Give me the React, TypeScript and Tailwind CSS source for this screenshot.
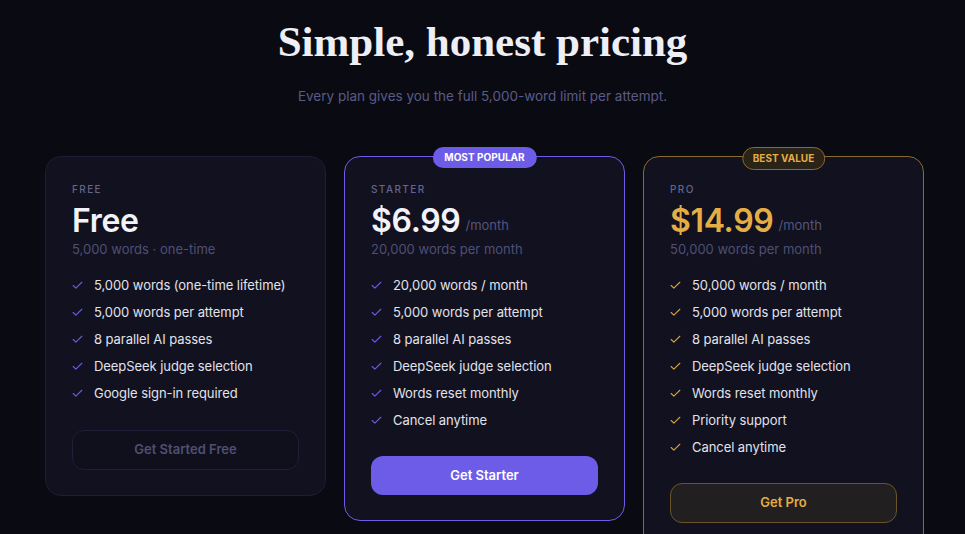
import { Check } from "lucide-react";

type Plan = {
  key: string;
  label: string;
  price: string;
  period?: string;
  sub: string;
  features: string[];
  cta: string;
  badge?: string;
  variant: "free" | "starter" | "pro";
};

const plans: Plan[] = [
  {
    key: "free",
    label: "FREE",
    price: "Free",
    sub: "5,000 words · one-time",
    features: [
      "5,000 words (one-time lifetime)",
      "5,000 words per attempt",
      "8 parallel AI passes",
      "DeepSeek judge selection",
      "Google sign-in required",
    ],
    cta: "Get Started Free",
    variant: "free",
  },
  {
    key: "starter",
    label: "STARTER",
    price: "$6.99",
    period: "/month",
    sub: "20,000 words per month",
    features: [
      "20,000 words / month",
      "5,000 words per attempt",
      "8 parallel AI passes",
      "DeepSeek judge selection",
      "Words reset monthly",
      "Cancel anytime",
    ],
    cta: "Get Starter",
    badge: "MOST POPULAR",
    variant: "starter",
  },
  {
    key: "pro",
    label: "PRO",
    price: "$14.99",
    period: "/month",
    sub: "50,000 words per month",
    features: [
      "50,000 words / month",
      "5,000 words per attempt",
      "8 parallel AI passes",
      "DeepSeek judge selection",
      "Words reset monthly",
      "Priority support",
      "Cancel anytime",
    ],
    cta: "Get Pro",
    badge: "BEST VALUE",
    variant: "pro",
  },
];

function PlanCard({ plan }: { plan: Plan }) {
  const border =
    plan.variant === "starter"
      ? "border-[#6c5ce7]"
      : plan.variant === "pro"
      ? "border-[#8a6a2f]"
      : "border-[#1d1d33]";
  const checkColor = plan.variant === "pro" ? "text-[#d9a23d]" : "text-[#6c5ce7]";
  const priceColor = plan.variant === "pro" ? "text-[#e5ad45]" : "text-[#f2f2f8]";

  return (
    <div className={`relative w-[281px] rounded-2xl border bg-[#11111f] px-[26px] pt-[25px] pb-[25px] ${border}`}>
      {plan.badge && plan.variant === "starter" && (
        <div className="absolute -top-[10px] left-1/2 -translate-x-1/2 rounded-full bg-[#6c5ce7] px-3 h-[21px] flex items-center text-[10px] font-bold text-white whitespace-nowrap">
          {plan.badge}
        </div>
      )}
      {plan.badge && plan.variant === "pro" && (
        <div className="absolute -top-[10px] left-1/2 -translate-x-1/2 rounded-full border border-[#8a6a2f] bg-[#2a2318] px-[10px] h-[23px] flex items-center text-[10px] font-bold text-[#e5ad45] whitespace-nowrap">
          {plan.badge}
        </div>
      )}

      <div className="text-[10px] leading-[14px] font-medium tracking-[0.14em] text-[#65658a]">{plan.label}</div>
      <div className="mt-[6px] h-[38px] flex items-center gap-[5px]">
        <span className={`text-[32px] leading-[38px] font-semibold tracking-[-0.01em] ${priceColor}`}>{plan.price}</span>
        {plan.period && <span className="mt-[7px] text-[13px] leading-[18px] text-[#55557c]">{plan.period}</span>}
      </div>
      <div className="text-[13px] leading-[18px] text-[#4f4f75]">{plan.sub}</div>

      <ul className="mt-[14px]">
        {plan.features.map((f) => (
          <li key={f} className="flex items-center gap-[10px] h-[27px] text-[13px] tracking-[-0.005em] text-[#e2e2ec]">
            <Check className={`-ml-[1px] w-[13px] h-[13px] shrink-0 ${checkColor}`} strokeWidth={2} />
            <span>{f}</span>
          </li>
        ))}
      </ul>

      {plan.variant === "free" && (
        <button className="mt-[23px] w-full h-[40px] rounded-xl border border-[#1f1f35] bg-[#10101d] text-[13px] font-semibold text-[#4f4f72]">
          {plan.cta}
        </button>
      )}
      {plan.variant === "starter" && (
        <button className="mt-[22px] w-full h-[39px] rounded-xl bg-[#6c5ce7] text-[13px] font-semibold text-white">
          {plan.cta}
        </button>
      )}
      {plan.variant === "pro" && (
        <button className="mt-[22px] w-full h-[40px] rounded-xl border border-[#6b5429] bg-[#221f21] text-[13px] font-semibold text-[#e5ad45]">
          {plan.cta}
        </button>
      )}
    </div>
  );
}

export default function App() {
  return (
    <div className="min-h-screen bg-[#0a0a12] font-['Inter','Noto_Sans',sans-serif] pt-[14px] overflow-hidden">
      <h1 className="text-center text-[43px] leading-[56px] font-bold text-[#eeeef6] font-['Liberation_Serif','DejaVu_Serif',serif]">
        Simple, honest pricing
      </h1>
      <p className="mt-[16px] text-center text-[13.5px] leading-[20px] text-[#5a5a88]">
        Every plan gives you the full 5,000-word limit per attempt.
      </p>
      <div className="mt-[50px] ml-[4px] flex justify-center items-start gap-[18px]">
        {plans.map((p) => (
          <PlanCard key={p.key} plan={p} />
        ))}
      </div>
    </div>
  );
}
